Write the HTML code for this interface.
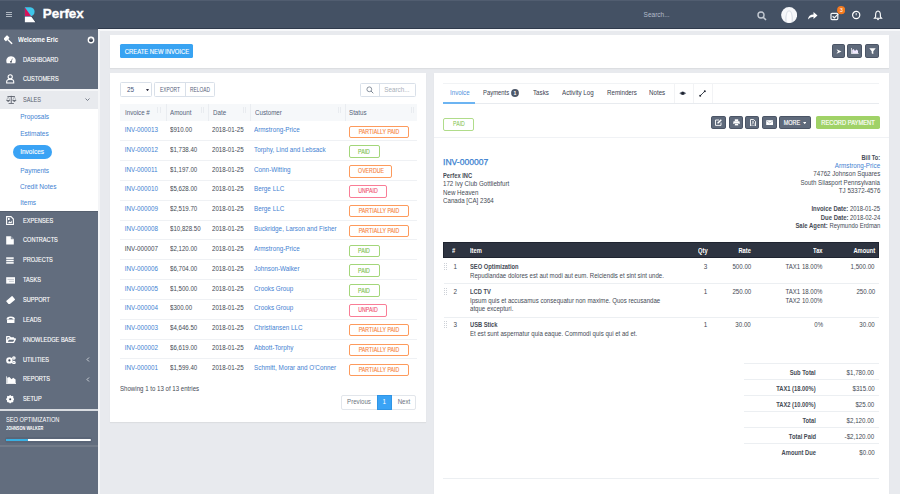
<!DOCTYPE html><html><head><meta charset="utf-8"><style>
html,body{margin:0;padding:0;width:900px;height:494px;overflow:hidden;background:#e8eaee;font-family:"Liberation Sans",sans-serif;}
.t{position:absolute;white-space:nowrap;}
.r{position:absolute;display:block;}
</style></head><body>
<div class="r" style="left:0.00px;top:0.00px;width:900.00px;height:29.00px;background:#445164;"></div>
<div class="r" style="left:0.00px;top:0.00px;width:900.00px;height:1.00px;background:#515d70;"></div>
<div class="r" style="left:98.00px;top:28.00px;width:802.00px;height:1.00px;background:#2f3a4c;"></div>
<div class="r" style="left:0.00px;top:28.50px;width:98.00px;height:1.50px;background:#535e70;"></div>
<div class="r" style="left:98.00px;top:29.30px;width:802.00px;height:1.50px;background:#f7f8fa;"></div>
<div class="r" style="left:5.50px;top:12.20px;width:6.00px;height:0.90px;background:#aeb6c1;"></div>
<div class="r" style="left:5.50px;top:14.20px;width:6.00px;height:0.90px;background:#aeb6c1;"></div>
<div class="r" style="left:5.50px;top:16.20px;width:6.00px;height:0.90px;background:#aeb6c1;"></div>
<svg class="r" style="left:24.00px;top:6.50px;" width="12.5" height="16" viewBox="0 0 12.5 16">
<path d="M0.9 0.3 H6.3 A5 4.6 0 0 1 6.3 9.4 H0.9 Z" fill="#3fc6ea"/>
<path d="M0.9 0.5 L7.2 9.3 L0.9 9.3 Z" fill="#d5135a"/>
<path d="M7.2 9.4 L11.8 15.4" stroke="#2a3344" stroke-width="0.8"/>
<path d="M0.9 9.7 H7.4 L11.4 15.3 H0.9 Z" fill="#ffffff"/>
</svg>
<div class="t" style="top:5.60px;left:42.80px;font-size:13.4px;color:#fff;line-height:16px;font-weight:700;-webkit-text-stroke:0.35px #fff;">Perfex</div>
<div class="t" style="top:10.00px;left:643.60px;font-size:6.5px;color:#b3bccb;line-height:10px;">Search...</div>
<svg class="r" style="left:757.00px;top:11.00px;" width="10" height="10" viewBox="0 0 10 10"><circle cx="4" cy="4" r="3" fill="none" stroke="#c3c9d2" stroke-width="1.4"/><path d="M6.2 6.2 L9 9" stroke="#c3c9d2" stroke-width="1.6"/></svg>
<svg class="r" style="left:780.70px;top:6.70px;" width="16.2" height="16.2" viewBox="0 0 16.2 16.2"><circle cx="8.1" cy="8.1" r="8" fill="#f5f6f9"/><path d="M4.2 15 Q3.6 9.5 5.4 5.5 Q8.1 1.2 10.8 5.5 Q12.6 9.5 12 15 Z" fill="#dde1e8"/><path d="M5.6 15 Q5.2 10 6.3 6 Q8.1 3 9.9 6 Q11 10 10.6 15 Z" fill="#fbfbfd"/></svg>
<svg class="r" style="left:807.00px;top:11.00px;" width="11" height="9" viewBox="0 0 11 9"><path d="M1 8.5 Q1.5 3.5 6.5 3.5 V1 L10.5 4.5 L6.5 8 V5.8 Q3 5.8 1 8.5 Z" fill="#ffffff"/></svg>
<svg class="r" style="left:829.50px;top:11.50px;" width="10" height="9" viewBox="0 0 10 9"><rect x="1" y="1.3" width="6.8" height="6.3" rx="1" fill="none" stroke="#f3f5f8" stroke-width="1.2"/><path d="M2.6 4.3 L4.3 5.9 L8.3 1.8" fill="none" stroke="#f3f5f8" stroke-width="1.2"/></svg>
<svg class="r" style="left:836.70px;top:6.20px;" width="8.4" height="8.4" viewBox="0 0 8.4 8.4"><circle cx="4.2" cy="4.2" r="4.1" fill="#f57a1f"/><text x="4.2" y="6.2" font-size="5.6" font-family="Liberation Sans" fill="#fff" text-anchor="middle">3</text></svg>
<svg class="r" style="left:851.00px;top:10.30px;" width="11" height="11" viewBox="0 0 11 11"><circle cx="5.2" cy="5" r="3.6" fill="none" stroke="#fff" stroke-width="1.2"/><path d="M5.2 3 V5.3" fill="none" stroke="#fff" stroke-width="0.9"/></svg>
<svg class="r" style="left:873.00px;top:10.30px;" width="10" height="10.5" viewBox="0 0 10 10.5"><path d="M5 1 Q2.6 1.3 2.6 5 V6.8 L1.4 8.3 H8.6 L7.4 6.8 V5 Q7.4 1.3 5 1 Z" fill="none" stroke="#fff" stroke-width="1.1"/><circle cx="5" cy="9.3" r="0.9" fill="#fff"/></svg>
<div class="r" style="left:0.00px;top:30.00px;width:98.00px;height:464.00px;background:#626d7e;"></div>
<div class="r" style="left:98.00px;top:30.00px;width:2.00px;height:464.00px;background:#f4f5f7;"></div>
<div class="r" style="left:0.00px;top:89.00px;width:98.00px;height:1.50px;background:#f4f5f7;"></div>
<div class="r" style="left:0.00px;top:90.50px;width:98.00px;height:18.50px;background:#e8eaee;"></div>
<div class="r" style="left:0.00px;top:109.00px;width:98.00px;height:102.00px;background:#ffffff;"></div>
<div class="r" style="left:0.00px;top:211.00px;width:98.00px;height:1.00px;background:#56606f;"></div>
<div class="t" style="top:34.60px;left:17.80px;font-size:6.4px;color:#ffffff;line-height:10px;font-weight:700;transform:scaleX(0.96);transform-origin:left center;">Welcome Eric</div>
<svg class="r" style="left:86.50px;top:35.90px;" width="8" height="8" viewBox="0 0 8 8"><circle cx="4" cy="4" r="3.4" fill="#fff"/><circle cx="4" cy="4.2" r="1.9" fill="#3b4454"/><path d="M4 0.8 V3.6" stroke="#fff" stroke-width="0.9"/><path d="M4 1.8 V3.8" stroke="#3b4454" stroke-width="0.7"/></svg>
<div class="t" style="top:54.50px;left:22.70px;font-size:6.5px;color:#ffffff;line-height:10px;transform:scaleX(0.86);transform-origin:left center;-webkit-text-stroke:0.12px #fff;">DASHBOARD</div>
<div class="t" style="top:74.20px;left:22.70px;font-size:6.5px;color:#ffffff;line-height:10px;transform:scaleX(0.86);transform-origin:left center;-webkit-text-stroke:0.12px #fff;">CUSTOMERS</div>
<div class="t" style="top:94.50px;left:22.70px;font-size:6.5px;color:#5a616e;line-height:10px;transform:scaleX(0.86);transform-origin:left center;">SALES</div>
<svg class="r" style="left:84.50px;top:97.50px;" width="5" height="3.5" viewBox="0 0 5 3.5"><path d="M0.5 0.5 L2.5 2.5 L4.5 0.5" fill="none" stroke="#6b7380" stroke-width="0.9"/></svg>
<svg class="r" style="left:3.50px;top:34.50px;" width="10" height="10" viewBox="0 0 10 10"><g transform="rotate(-45 5 5)"><rect x="1.8" y="0.2" width="5.2" height="3.6" rx="0.6" fill="#ffffff"/><rect x="3.7" y="3.6" width="1.5" height="6.4" rx="0.5" fill="#ffffff"/></g></svg>
<svg class="r" style="left:5.60px;top:55.60px;" width="10" height="8" viewBox="0 0 10 8"><path d="M0.9 7.2 A4.7 4.7 0 1 1 9.1 7.2 Z" fill="#ffffff"/><circle cx="5" cy="5.8" r="0.9" fill="#3b4454"/><path d="M5 5.8 L6.4 2.6" stroke="#3b4454" stroke-width="0.6"/></svg>
<svg class="r" style="left:5.80px;top:74.30px;" width="9" height="10" viewBox="0 0 9 10"><circle cx="4.2" cy="2.8" r="2.1" fill="none" stroke="#ffffff" stroke-width="1.1"/><path d="M0.7 9 V7.6 Q0.7 5.2 4.2 5.2 Q7.7 5.2 7.7 7.6 V9 Z" fill="none" stroke="#ffffff" stroke-width="1.1"/></svg>
<svg class="r" style="left:6.00px;top:94.70px;" width="10.5" height="9.5" viewBox="0 0 10.5 9.5"><path d="M5.25 0.8 V8.3 M1.5 1.5 H9 M2.6 8.6 H7.9" stroke="#5a606b" stroke-width="0.9"/><path d="M0.4 5.6 L2.2 1.6 L4 5.6 M6.5 5.6 L8.3 1.6 L10.1 5.6" fill="none" stroke="#8a9099" stroke-width="0.6"/><path d="M0.2 5.3 H4.2 Q2.2 8 0.2 5.3 Z M6.3 5.3 H10.3 Q8.3 8 6.3 5.3 Z" fill="#3f4550"/></svg>
<div class="t" style="top:112.40px;left:20.20px;font-size:6.5px;color:#3f82d2;line-height:10px;">Proposals</div>
<div class="t" style="top:128.90px;left:20.20px;font-size:6.5px;color:#3f82d2;line-height:10px;">Estimates</div>
<div class="r" style="left:13.20px;top:144.80px;width:38.80px;height:14.20px;background:#3aa3f5;border-radius:7px;"></div>
<div class="t" style="top:147.40px;left:20.20px;font-size:6.5px;color:#fff;line-height:10px;-webkit-text-stroke:0.1px #fff;">Invoices</div>
<div class="t" style="top:166.30px;left:20.20px;font-size:6.5px;color:#3f82d2;line-height:10px;">Payments</div>
<div class="t" style="top:182.20px;left:20.20px;font-size:6.5px;color:#3f82d2;line-height:10px;transform:scaleX(1.01);transform-origin:left center;">Credit Notes</div>
<div class="t" style="top:198.30px;left:20.20px;font-size:6.5px;color:#3f82d2;line-height:10px;">Items</div>
<div class="t" style="top:215.50px;left:22.70px;font-size:6.5px;color:#ffffff;line-height:10px;transform:scaleX(0.86);transform-origin:left center;-webkit-text-stroke:0.12px #fff;">EXPENSES</div>
<div class="t" style="top:235.36px;left:22.70px;font-size:6.5px;color:#ffffff;line-height:10px;transform:scaleX(0.86);transform-origin:left center;-webkit-text-stroke:0.12px #fff;">CONTRACTS</div>
<div class="t" style="top:255.22px;left:22.70px;font-size:6.5px;color:#ffffff;line-height:10px;transform:scaleX(0.86);transform-origin:left center;-webkit-text-stroke:0.12px #fff;">PROJECTS</div>
<div class="t" style="top:275.08px;left:22.70px;font-size:6.5px;color:#ffffff;line-height:10px;transform:scaleX(0.86);transform-origin:left center;-webkit-text-stroke:0.12px #fff;">TASKS</div>
<div class="t" style="top:294.94px;left:22.70px;font-size:6.5px;color:#ffffff;line-height:10px;transform:scaleX(0.86);transform-origin:left center;-webkit-text-stroke:0.12px #fff;">SUPPORT</div>
<div class="t" style="top:314.80px;left:22.70px;font-size:6.5px;color:#ffffff;line-height:10px;transform:scaleX(0.86);transform-origin:left center;-webkit-text-stroke:0.12px #fff;">LEADS</div>
<div class="t" style="top:334.66px;left:22.70px;font-size:6.5px;color:#ffffff;line-height:10px;transform:scaleX(0.86);transform-origin:left center;-webkit-text-stroke:0.12px #fff;">KNOWLEDGE BASE</div>
<div class="t" style="top:354.52px;left:22.70px;font-size:6.5px;color:#ffffff;line-height:10px;transform:scaleX(0.86);transform-origin:left center;-webkit-text-stroke:0.12px #fff;">UTILITIES</div>
<div class="t" style="top:374.38px;left:22.70px;font-size:6.5px;color:#ffffff;line-height:10px;transform:scaleX(0.86);transform-origin:left center;-webkit-text-stroke:0.12px #fff;">REPORTS</div>
<div class="t" style="top:394.24px;left:22.70px;font-size:6.5px;color:#ffffff;line-height:10px;transform:scaleX(0.86);transform-origin:left center;-webkit-text-stroke:0.12px #fff;">SETUP</div>
<svg class="r" style="left:86.00px;top:357.20px;" width="3.5" height="5" viewBox="0 0 3.5 5"><path d="M3 0.5 L1 2.5 L3 4.5" fill="none" stroke="#d6dae0" stroke-width="0.9"/></svg>
<svg class="r" style="left:86.00px;top:377.00px;" width="3.5" height="5" viewBox="0 0 3.5 5"><path d="M3 0.5 L1 2.5 L3 4.5" fill="none" stroke="#d6dae0" stroke-width="0.9"/></svg>
<svg class="r" style="left:6.00px;top:216.30px;" width="8" height="9.2" viewBox="0 0 8 9.2"><path d="M0.6 0.6 H5 L7.4 3 V8.6 H0.6 Z" fill="none" stroke="#ffffff" stroke-width="1.1"/><rect x="2" y="2" width="1.6" height="2" fill="#ffffff"/><path d="M2 7 L3.5 5.2 L4.6 6.2 L5.8 4.5 V7.2 H2 Z" fill="#ffffff"/></svg>
<svg class="r" style="left:6.00px;top:236.40px;" width="8" height="8.8" viewBox="0 0 8 8.8"><path d="M0.2 0.2 H4.8 L7.8 3.2 V8.6 H0.2 Z" fill="#ffffff"/><path d="M4.8 0.2 V3.2 H7.8" fill="#8a93a1"/></svg>
<svg class="r" style="left:6.00px;top:257.30px;" width="8" height="7" viewBox="0 0 8 7"><rect x="0.2" y="0.3" width="7.5" height="1.6" fill="#ffffff"/><rect x="0.2" y="2.7" width="7.5" height="1.6" fill="#ffffff"/><rect x="0.2" y="5.1" width="7.5" height="1.6" fill="#ffffff"/></svg>
<svg class="r" style="left:5.80px;top:276.80px;" width="9.6" height="6.8" viewBox="0 0 9.6 6.8"><rect x="0.2" y="0.2" width="9.2" height="6.4" fill="#ffffff"/><path d="M1.5 2.4 H8 M3 4.3 H8" stroke="#aab1bc" stroke-width="0.7"/></svg>
<svg class="r" style="left:6.00px;top:295.80px;" width="9.2" height="8.6" viewBox="0 0 9.2 8.6"><g transform="rotate(-40 4.6 4.3)"><rect x="0.6" y="1.9" width="8" height="4.8" rx="0.6" fill="#ffffff"/></g></svg>
<svg class="r" style="left:5.90px;top:316.00px;" width="9.5" height="7.2" viewBox="0 0 9.5 7.2"><path d="M0.5 3.5 Q0.5 0.4 4.75 0.4 Q9 0.4 9 3.5 L7.2 3.5 Q6.5 2 4.75 2 Q3 2 2.3 3.5 Z" fill="#ffffff"/><rect x="1" y="3.6" width="7.5" height="3.3" rx="0.5" fill="#ffffff"/></svg>
<svg class="r" style="left:6.00px;top:336.00px;" width="10" height="7.2" viewBox="0 0 10 7.2"><path d="M0.7 6.4 V0.7 H3.5 L4.5 1.8 H7.5 V3 M0.7 6.4 L2.6 3 H9.4 L7.6 6.4 Z" fill="none" stroke="#ffffff" stroke-width="1.3" stroke-linejoin="round"/></svg>
<svg class="r" style="left:6.00px;top:355.60px;" width="10" height="8.4" viewBox="0 0 10 8.4"><circle cx="3.4" cy="4.4" r="3.2" fill="#ffffff"/><circle cx="3.4" cy="4.4" r="1.1" fill="#3b4454"/><circle cx="7.9" cy="2" r="1.8" fill="#ffffff"/><circle cx="7.9" cy="2" r="0.6" fill="#8a93a1"/><circle cx="7.9" cy="6.5" r="1.8" fill="#ffffff"/><circle cx="7.9" cy="6.5" r="0.6" fill="#8a93a1"/></svg>
<svg class="r" style="left:5.80px;top:375.80px;" width="10.2" height="7.8" viewBox="0 0 10.2 7.8"><path d="M0.3 0.3 V7.5 H10" fill="none" stroke="#ffffff" stroke-width="0.9"/><path d="M1.2 7 V1.8 L3.4 1 L5.6 3.2 L7.2 1.8 L9.6 3.5 V7 Z" fill="#ffffff"/></svg>
<svg class="r" style="left:6.00px;top:395.20px;" width="8.4" height="8.4" viewBox="0 0 8.4 8.4"><circle cx="4.2" cy="4.2" r="2.6" fill="none" stroke="#ffffff" stroke-width="1.7"/><g stroke="#ffffff" stroke-width="1.4"><path d="M4.2 4.2 L8.20 4.20"/><path d="M4.2 4.2 L7.03 7.03"/><path d="M4.2 4.2 L4.20 8.20"/><path d="M4.2 4.2 L1.37 7.03"/><path d="M4.2 4.2 L0.20 4.20"/><path d="M4.2 4.2 L1.37 1.37"/><path d="M4.2 4.2 L4.20 0.20"/><path d="M4.2 4.2 L7.03 1.37"/></g><circle cx="4.2" cy="4.2" r="1" fill="#3b4454"/></svg>
<div class="r" style="left:0.00px;top:409.20px;width:98.00px;height:2.00px;background:#d9dce1;"></div>
<div class="t" style="top:415.20px;left:6.40px;font-size:6.3px;color:#ffffff;line-height:10px;transform:scaleX(0.9);transform-origin:left center;">SEO OPTIMIZATION</div>
<div class="t" style="top:424.20px;left:6.40px;font-size:4.6px;color:#ffffff;line-height:10px;font-weight:700;transform:scaleX(0.85);transform-origin:left center;">JOHNSON WALKER</div>
<div class="r" style="left:4.80px;top:437.00px;width:87.40px;height:6.20px;background:#5a6577;border-radius:3px;"></div>
<div class="r" style="left:6.00px;top:439.00px;width:85.00px;height:2.30px;background:#ffffff;border-radius:1px;"></div>
<div class="r" style="left:6.00px;top:439.00px;width:22.30px;height:2.30px;background:#3ab0e2;"></div>
<div class="r" style="left:0.00px;top:445.30px;width:98.00px;height:1.50px;background:#727b89;"></div>
<div class="r" style="left:110.00px;top:35.00px;width:779.20px;height:33.00px;background:#fff;box-shadow:0 1px 1px rgba(0,0,0,0.05);"></div>
<div class="r" style="left:120.00px;top:44.30px;width:73.30px;height:13.70px;background:#38a3f2;border-radius:1.5px;"></div>
<div class="t" style="top:46.90px;left:6.50px;width:300px;text-align:center;font-size:6.5px;color:#fff;line-height:10px;transform:scaleX(0.9);transform-origin:center center;-webkit-text-stroke:0.12px #fff;">CREATE NEW INVOICE</div>
<div class="r" style="left:832.30px;top:44.30px;width:12.40px;height:13.40px;background:#5f6a7b;border-radius:1.8px;box-sizing:border-box;border:1px solid #4b5566;"></div>
<div class="r" style="left:847.10px;top:44.30px;width:15.40px;height:13.40px;background:#5f6a7b;border-radius:1.8px;box-sizing:border-box;border:1px solid #4b5566;"></div>
<div class="r" style="left:865.30px;top:44.30px;width:14.10px;height:13.40px;background:#5f6a7b;border-radius:1.8px;box-sizing:border-box;border:1px solid #4b5566;"></div>
<svg class="r" style="left:835.50px;top:48.50px;" width="6" height="5" viewBox="0 0 6 5"><path d="M0.5 0.3 L5.5 2.5 L0.5 4.7 L2 2.5 Z" fill="#fff"/></svg>
<svg class="r" style="left:851.00px;top:48.00px;" width="8" height="6" viewBox="0 0 8 6"><path d="M0.4 0 V5.6 H7.6" fill="none" stroke="#fff" stroke-width="0.8"/><path d="M1.2 5.2 V2 L2.6 1 L4 3 L5.4 1.5 L7 2.8 V5.2 Z" fill="#f0e8ff"/></svg>
<svg class="r" style="left:869.00px;top:47.80px;" width="7" height="6.5" viewBox="0 0 7 6.5"><path d="M0.3 0.3 H6.7 L4.3 3.3 V6.2 L2.7 5.2 V3.3 Z" fill="#fff"/></svg>
<div class="r" style="left:110.00px;top:73.00px;width:316.00px;height:349.30px;background:#fff;box-shadow:0 1px 1px rgba(0,0,0,0.05);"></div>
<div class="r" style="left:120.00px;top:82.20px;width:32.00px;height:15.00px;background:#fff;box-sizing:border-box;border:1px solid #d9e0e9;border-radius:1.5px;"></div>
<div class="t" style="top:84.80px;left:127.00px;font-size:6.4px;color:#47577a;line-height:10px;">25</div>
<svg class="r" style="left:145.60px;top:88.80px;" width="3" height="2.4" viewBox="0 0 3 2.4"><path d="M0 0 H3 L1.5 2.4 Z" fill="#334"/></svg>
<div class="r" style="left:154.00px;top:82.20px;width:61.00px;height:15.00px;background:#fff;box-sizing:border-box;border:1px solid #d9e0e9;border-radius:1.5px;"></div>
<div class="r" style="left:184.50px;top:82.20px;width:0.80px;height:15.00px;background:#d9e0e9;"></div>
<div class="t" style="top:84.80px;left:19.50px;width:300px;text-align:center;font-size:6.3px;color:#56607a;line-height:10px;transform:scaleX(0.77);transform-origin:center center;">EXPORT</div>
<div class="t" style="top:84.80px;left:49.60px;width:300px;text-align:center;font-size:6.3px;color:#56607a;line-height:10px;transform:scaleX(0.77);transform-origin:center center;">RELOAD</div>
<div class="r" style="left:360.40px;top:82.50px;width:56.10px;height:14.50px;background:#fff;box-sizing:border-box;border:1px solid #d9e0e9;border-radius:1.5px;"></div>
<div class="r" style="left:379.00px;top:82.50px;width:0.80px;height:14.50px;background:#d9e0e9;"></div>
<svg class="r" style="left:366.00px;top:86.00px;" width="8" height="8" viewBox="0 0 8 8"><circle cx="3.3" cy="3.3" r="2.4" fill="none" stroke="#7d8794" stroke-width="0.9"/><path d="M5 5 L7.3 7.3" stroke="#7d8794" stroke-width="1"/></svg>
<div class="t" style="top:84.90px;left:384.30px;font-size:6.3px;color:#a9b0ba;line-height:10px;">Search...</div>
<div class="r" style="left:120.00px;top:103.50px;width:296.50px;height:17.00px;background:#f6f8fa;"></div>
<div class="r" style="left:165.50px;top:103.50px;width:0.80px;height:17.00px;background:#eaedf1;"></div>
<div class="r" style="left:207.50px;top:103.50px;width:0.80px;height:17.00px;background:#eaedf1;"></div>
<div class="r" style="left:249.70px;top:103.50px;width:0.80px;height:17.00px;background:#eaedf1;"></div>
<div class="r" style="left:344.60px;top:103.50px;width:0.80px;height:17.00px;background:#eaedf1;"></div>
<div class="r" style="left:157.00px;top:107.00px;width:0.90px;height:6.00px;background:#e9ecf0;"></div>
<div class="r" style="left:159.90px;top:107.00px;width:0.90px;height:6.00px;background:#e9ecf0;"></div>
<div class="r" style="left:200.50px;top:107.00px;width:0.90px;height:6.00px;background:#e9ecf0;"></div>
<div class="r" style="left:203.40px;top:107.00px;width:0.90px;height:6.00px;background:#e9ecf0;"></div>
<div class="r" style="left:242.50px;top:107.00px;width:0.90px;height:6.00px;background:#e9ecf0;"></div>
<div class="r" style="left:245.40px;top:107.00px;width:0.90px;height:6.00px;background:#e9ecf0;"></div>
<div class="r" style="left:337.50px;top:107.00px;width:0.90px;height:6.00px;background:#e9ecf0;"></div>
<div class="r" style="left:340.40px;top:107.00px;width:0.90px;height:6.00px;background:#e9ecf0;"></div>
<div class="r" style="left:410.50px;top:107.00px;width:0.90px;height:6.00px;background:#e9ecf0;"></div>
<div class="r" style="left:413.40px;top:107.00px;width:0.90px;height:6.00px;background:#e9ecf0;"></div>
<div class="t" style="top:107.60px;left:125.00px;font-size:6.4px;color:#55647a;line-height:10px;transform:scaleX(0.97);transform-origin:left center;">Invoice #</div>
<div class="t" style="top:107.60px;left:170.30px;font-size:6.4px;color:#55647a;line-height:10px;transform:scaleX(0.97);transform-origin:left center;">Amount</div>
<div class="t" style="top:107.60px;left:212.50px;font-size:6.4px;color:#55647a;line-height:10px;transform:scaleX(0.97);transform-origin:left center;">Date</div>
<div class="t" style="top:107.60px;left:254.50px;font-size:6.4px;color:#55647a;line-height:10px;transform:scaleX(0.97);transform-origin:left center;">Customer</div>
<div class="t" style="top:107.60px;left:349.40px;font-size:6.4px;color:#55647a;line-height:10px;transform:scaleX(0.97);transform-origin:left center;">Status</div>
<div class="t" style="top:124.90px;left:124.80px;font-size:6.3px;color:#3f82d2;line-height:10px;">INV-000013</div>
<div class="t" style="top:124.90px;left:170.40px;font-size:6.3px;color:#454b55;line-height:10px;transform:scaleX(0.97);transform-origin:left center;">$910.00</div>
<div class="t" style="top:124.90px;left:212.40px;font-size:6.3px;color:#454b55;line-height:10px;transform:scaleX(0.98);transform-origin:left center;">2018-01-25</div>
<div class="t" style="top:124.90px;left:254.40px;font-size:6.3px;color:#3f82d2;line-height:10px;transform:scaleX(1.005);transform-origin:left center;">Armstrong-Price</div>
<div class="r" style="left:349.20px;top:125.50px;width:59.60px;height:12.50px;background:#fff;box-sizing:border-box;border:1px solid #fd9a5c;border-radius:2px;"></div>
<div class="t" style="top:126.80px;left:229.00px;width:300px;text-align:center;font-size:6.3px;color:#f77f3a;line-height:10px;transform:scaleX(0.83);transform-origin:center center;-webkit-text-stroke:0.12px #f77f3a;">PARTIALLY PAID</div>
<div class="r" style="left:120.00px;top:140.24px;width:296.50px;height:0.80px;background:#eff1f4;"></div>
<div class="t" style="top:144.74px;left:124.80px;font-size:6.3px;color:#3f82d2;line-height:10px;">INV-000012</div>
<div class="t" style="top:144.74px;left:170.40px;font-size:6.3px;color:#454b55;line-height:10px;transform:scaleX(0.97);transform-origin:left center;">$1,738.40</div>
<div class="t" style="top:144.74px;left:212.40px;font-size:6.3px;color:#454b55;line-height:10px;transform:scaleX(0.98);transform-origin:left center;">2018-01-25</div>
<div class="t" style="top:144.74px;left:254.40px;font-size:6.3px;color:#3f82d2;line-height:10px;transform:scaleX(1.005);transform-origin:left center;">Torphy, Lind and Lebsack</div>
<div class="r" style="left:349.20px;top:145.34px;width:30.50px;height:12.50px;background:#fff;box-sizing:border-box;border:1px solid #a3d67a;border-radius:2px;"></div>
<div class="t" style="top:146.64px;left:214.45px;width:300px;text-align:center;font-size:6.3px;color:#7cc14a;line-height:10px;transform:scaleX(0.83);transform-origin:center center;-webkit-text-stroke:0.12px #7cc14a;">PAID</div>
<div class="r" style="left:120.00px;top:160.08px;width:296.50px;height:0.80px;background:#eff1f4;"></div>
<div class="t" style="top:164.58px;left:124.80px;font-size:6.3px;color:#3f82d2;line-height:10px;">INV-000011</div>
<div class="t" style="top:164.58px;left:170.40px;font-size:6.3px;color:#454b55;line-height:10px;transform:scaleX(0.97);transform-origin:left center;">$1,197.00</div>
<div class="t" style="top:164.58px;left:212.40px;font-size:6.3px;color:#454b55;line-height:10px;transform:scaleX(0.98);transform-origin:left center;">2018-01-25</div>
<div class="t" style="top:164.58px;left:254.40px;font-size:6.3px;color:#3f82d2;line-height:10px;transform:scaleX(1.005);transform-origin:left center;">Conn-Witting</div>
<div class="r" style="left:349.20px;top:165.18px;width:42.60px;height:12.50px;background:#fff;box-sizing:border-box;border:1px solid #fd9a5c;border-radius:2px;"></div>
<div class="t" style="top:166.48px;left:220.50px;width:300px;text-align:center;font-size:6.3px;color:#f77f3a;line-height:10px;transform:scaleX(0.83);transform-origin:center center;-webkit-text-stroke:0.12px #f77f3a;">OVERDUE</div>
<div class="r" style="left:120.00px;top:179.92px;width:296.50px;height:0.80px;background:#eff1f4;"></div>
<div class="t" style="top:184.42px;left:124.80px;font-size:6.3px;color:#3f82d2;line-height:10px;">INV-000010</div>
<div class="t" style="top:184.42px;left:170.40px;font-size:6.3px;color:#454b55;line-height:10px;transform:scaleX(0.97);transform-origin:left center;">$5,628.00</div>
<div class="t" style="top:184.42px;left:212.40px;font-size:6.3px;color:#454b55;line-height:10px;transform:scaleX(0.98);transform-origin:left center;">2018-01-25</div>
<div class="t" style="top:184.42px;left:254.40px;font-size:6.3px;color:#3f82d2;line-height:10px;transform:scaleX(1.005);transform-origin:left center;">Berge LLC</div>
<div class="r" style="left:349.20px;top:185.02px;width:38.10px;height:12.50px;background:#fff;box-sizing:border-box;border:1px solid #f97d96;border-radius:2px;"></div>
<div class="t" style="top:186.32px;left:218.25px;width:300px;text-align:center;font-size:6.3px;color:#f0506e;line-height:10px;transform:scaleX(0.83);transform-origin:center center;-webkit-text-stroke:0.12px #f0506e;">UNPAID</div>
<div class="r" style="left:120.00px;top:199.76px;width:296.50px;height:0.80px;background:#eff1f4;"></div>
<div class="t" style="top:204.26px;left:124.80px;font-size:6.3px;color:#3f82d2;line-height:10px;">INV-000009</div>
<div class="t" style="top:204.26px;left:170.40px;font-size:6.3px;color:#454b55;line-height:10px;transform:scaleX(0.97);transform-origin:left center;">$2,519.70</div>
<div class="t" style="top:204.26px;left:212.40px;font-size:6.3px;color:#454b55;line-height:10px;transform:scaleX(0.98);transform-origin:left center;">2018-01-25</div>
<div class="t" style="top:204.26px;left:254.40px;font-size:6.3px;color:#3f82d2;line-height:10px;transform:scaleX(1.005);transform-origin:left center;">Berge LLC</div>
<div class="r" style="left:349.20px;top:204.86px;width:59.60px;height:12.50px;background:#fff;box-sizing:border-box;border:1px solid #fd9a5c;border-radius:2px;"></div>
<div class="t" style="top:206.16px;left:229.00px;width:300px;text-align:center;font-size:6.3px;color:#f77f3a;line-height:10px;transform:scaleX(0.83);transform-origin:center center;-webkit-text-stroke:0.12px #f77f3a;">PARTIALLY PAID</div>
<div class="r" style="left:120.00px;top:219.60px;width:296.50px;height:0.80px;background:#eff1f4;"></div>
<div class="t" style="top:224.10px;left:124.80px;font-size:6.3px;color:#3f82d2;line-height:10px;">INV-000008</div>
<div class="t" style="top:224.10px;left:170.40px;font-size:6.3px;color:#454b55;line-height:10px;transform:scaleX(0.97);transform-origin:left center;">$10,828.50</div>
<div class="t" style="top:224.10px;left:212.40px;font-size:6.3px;color:#454b55;line-height:10px;transform:scaleX(0.98);transform-origin:left center;">2018-01-25</div>
<div class="t" style="top:224.10px;left:254.40px;font-size:6.3px;color:#3f82d2;line-height:10px;transform:scaleX(1.005);transform-origin:left center;">Buckridge, Larson and Fisher</div>
<div class="r" style="left:349.20px;top:224.70px;width:59.60px;height:12.50px;background:#fff;box-sizing:border-box;border:1px solid #fd9a5c;border-radius:2px;"></div>
<div class="t" style="top:226.00px;left:229.00px;width:300px;text-align:center;font-size:6.3px;color:#f77f3a;line-height:10px;transform:scaleX(0.83);transform-origin:center center;-webkit-text-stroke:0.12px #f77f3a;">PARTIALLY PAID</div>
<div class="r" style="left:120.00px;top:239.44px;width:296.50px;height:0.80px;background:#eff1f4;"></div>
<div class="t" style="top:243.94px;left:124.80px;font-size:6.3px;color:#454b55;line-height:10px;">INV-000007</div>
<div class="t" style="top:243.94px;left:170.40px;font-size:6.3px;color:#454b55;line-height:10px;transform:scaleX(0.97);transform-origin:left center;">$2,120.00</div>
<div class="t" style="top:243.94px;left:212.40px;font-size:6.3px;color:#454b55;line-height:10px;transform:scaleX(0.98);transform-origin:left center;">2018-01-25</div>
<div class="t" style="top:243.94px;left:254.40px;font-size:6.3px;color:#3f82d2;line-height:10px;transform:scaleX(1.005);transform-origin:left center;">Armstrong-Price</div>
<div class="r" style="left:349.20px;top:244.54px;width:30.50px;height:12.50px;background:#fff;box-sizing:border-box;border:1px solid #a3d67a;border-radius:2px;"></div>
<div class="t" style="top:245.84px;left:214.45px;width:300px;text-align:center;font-size:6.3px;color:#7cc14a;line-height:10px;transform:scaleX(0.83);transform-origin:center center;-webkit-text-stroke:0.12px #7cc14a;">PAID</div>
<div class="r" style="left:120.00px;top:259.28px;width:296.50px;height:0.80px;background:#eff1f4;"></div>
<div class="t" style="top:263.78px;left:124.80px;font-size:6.3px;color:#3f82d2;line-height:10px;">INV-000006</div>
<div class="t" style="top:263.78px;left:170.40px;font-size:6.3px;color:#454b55;line-height:10px;transform:scaleX(0.97);transform-origin:left center;">$6,704.00</div>
<div class="t" style="top:263.78px;left:212.40px;font-size:6.3px;color:#454b55;line-height:10px;transform:scaleX(0.98);transform-origin:left center;">2018-01-25</div>
<div class="t" style="top:263.78px;left:254.40px;font-size:6.3px;color:#3f82d2;line-height:10px;transform:scaleX(1.005);transform-origin:left center;">Johnson-Walker</div>
<div class="r" style="left:349.20px;top:264.38px;width:30.50px;height:12.50px;background:#fff;box-sizing:border-box;border:1px solid #a3d67a;border-radius:2px;"></div>
<div class="t" style="top:265.68px;left:214.45px;width:300px;text-align:center;font-size:6.3px;color:#7cc14a;line-height:10px;transform:scaleX(0.83);transform-origin:center center;-webkit-text-stroke:0.12px #7cc14a;">PAID</div>
<div class="r" style="left:120.00px;top:279.12px;width:296.50px;height:0.80px;background:#eff1f4;"></div>
<div class="t" style="top:283.62px;left:124.80px;font-size:6.3px;color:#3f82d2;line-height:10px;">INV-000005</div>
<div class="t" style="top:283.62px;left:170.40px;font-size:6.3px;color:#454b55;line-height:10px;transform:scaleX(0.97);transform-origin:left center;">$1,500.00</div>
<div class="t" style="top:283.62px;left:212.40px;font-size:6.3px;color:#454b55;line-height:10px;transform:scaleX(0.98);transform-origin:left center;">2018-01-25</div>
<div class="t" style="top:283.62px;left:254.40px;font-size:6.3px;color:#3f82d2;line-height:10px;transform:scaleX(1.005);transform-origin:left center;">Crooks Group</div>
<div class="r" style="left:349.20px;top:284.22px;width:30.50px;height:12.50px;background:#fff;box-sizing:border-box;border:1px solid #a3d67a;border-radius:2px;"></div>
<div class="t" style="top:285.52px;left:214.45px;width:300px;text-align:center;font-size:6.3px;color:#7cc14a;line-height:10px;transform:scaleX(0.83);transform-origin:center center;-webkit-text-stroke:0.12px #7cc14a;">PAID</div>
<div class="r" style="left:120.00px;top:298.96px;width:296.50px;height:0.80px;background:#eff1f4;"></div>
<div class="t" style="top:303.46px;left:124.80px;font-size:6.3px;color:#3f82d2;line-height:10px;">INV-000004</div>
<div class="t" style="top:303.46px;left:170.40px;font-size:6.3px;color:#454b55;line-height:10px;transform:scaleX(0.97);transform-origin:left center;">$300.00</div>
<div class="t" style="top:303.46px;left:212.40px;font-size:6.3px;color:#454b55;line-height:10px;transform:scaleX(0.98);transform-origin:left center;">2018-01-25</div>
<div class="t" style="top:303.46px;left:254.40px;font-size:6.3px;color:#3f82d2;line-height:10px;transform:scaleX(1.005);transform-origin:left center;">Crooks Group</div>
<div class="r" style="left:349.20px;top:304.06px;width:38.10px;height:12.50px;background:#fff;box-sizing:border-box;border:1px solid #f97d96;border-radius:2px;"></div>
<div class="t" style="top:305.36px;left:218.25px;width:300px;text-align:center;font-size:6.3px;color:#f0506e;line-height:10px;transform:scaleX(0.83);transform-origin:center center;-webkit-text-stroke:0.12px #f0506e;">UNPAID</div>
<div class="r" style="left:120.00px;top:318.80px;width:296.50px;height:0.80px;background:#eff1f4;"></div>
<div class="t" style="top:323.30px;left:124.80px;font-size:6.3px;color:#3f82d2;line-height:10px;">INV-000003</div>
<div class="t" style="top:323.30px;left:170.40px;font-size:6.3px;color:#454b55;line-height:10px;transform:scaleX(0.97);transform-origin:left center;">$4,646.50</div>
<div class="t" style="top:323.30px;left:212.40px;font-size:6.3px;color:#454b55;line-height:10px;transform:scaleX(0.98);transform-origin:left center;">2018-01-25</div>
<div class="t" style="top:323.30px;left:254.40px;font-size:6.3px;color:#3f82d2;line-height:10px;transform:scaleX(1.005);transform-origin:left center;">Christiansen LLC</div>
<div class="r" style="left:349.20px;top:323.90px;width:59.60px;height:12.50px;background:#fff;box-sizing:border-box;border:1px solid #fd9a5c;border-radius:2px;"></div>
<div class="t" style="top:325.20px;left:229.00px;width:300px;text-align:center;font-size:6.3px;color:#f77f3a;line-height:10px;transform:scaleX(0.83);transform-origin:center center;-webkit-text-stroke:0.12px #f77f3a;">PARTIALLY PAID</div>
<div class="r" style="left:120.00px;top:338.64px;width:296.50px;height:0.80px;background:#eff1f4;"></div>
<div class="t" style="top:343.14px;left:124.80px;font-size:6.3px;color:#3f82d2;line-height:10px;">INV-000002</div>
<div class="t" style="top:343.14px;left:170.40px;font-size:6.3px;color:#454b55;line-height:10px;transform:scaleX(0.97);transform-origin:left center;">$6,619.00</div>
<div class="t" style="top:343.14px;left:212.40px;font-size:6.3px;color:#454b55;line-height:10px;transform:scaleX(0.98);transform-origin:left center;">2018-01-25</div>
<div class="t" style="top:343.14px;left:254.40px;font-size:6.3px;color:#3f82d2;line-height:10px;transform:scaleX(1.005);transform-origin:left center;">Abbott-Torphy</div>
<div class="r" style="left:349.20px;top:343.74px;width:59.60px;height:12.50px;background:#fff;box-sizing:border-box;border:1px solid #fd9a5c;border-radius:2px;"></div>
<div class="t" style="top:345.04px;left:229.00px;width:300px;text-align:center;font-size:6.3px;color:#f77f3a;line-height:10px;transform:scaleX(0.83);transform-origin:center center;-webkit-text-stroke:0.12px #f77f3a;">PARTIALLY PAID</div>
<div class="r" style="left:120.00px;top:358.48px;width:296.50px;height:0.80px;background:#eff1f4;"></div>
<div class="t" style="top:362.98px;left:124.80px;font-size:6.3px;color:#3f82d2;line-height:10px;">INV-000001</div>
<div class="t" style="top:362.98px;left:170.40px;font-size:6.3px;color:#454b55;line-height:10px;transform:scaleX(0.97);transform-origin:left center;">$1,599.40</div>
<div class="t" style="top:362.98px;left:212.40px;font-size:6.3px;color:#454b55;line-height:10px;transform:scaleX(0.98);transform-origin:left center;">2018-01-25</div>
<div class="t" style="top:362.98px;left:254.40px;font-size:6.3px;color:#3f82d2;line-height:10px;transform:scaleX(1.005);transform-origin:left center;">Schmitt, Morar and O&#39;Conner</div>
<div class="r" style="left:349.20px;top:363.58px;width:59.60px;height:12.50px;background:#fff;box-sizing:border-box;border:1px solid #fd9a5c;border-radius:2px;"></div>
<div class="t" style="top:364.88px;left:229.00px;width:300px;text-align:center;font-size:6.3px;color:#f77f3a;line-height:10px;transform:scaleX(0.83);transform-origin:center center;-webkit-text-stroke:0.12px #f77f3a;">PARTIALLY PAID</div>
<div class="t" style="top:384.00px;left:120.00px;font-size:6.3px;color:#454b55;line-height:10px;transform:scaleX(0.97);transform-origin:left center;">Showing 1 to 13 of 13 entries</div>
<div class="r" style="left:341.10px;top:394.50px;width:75.30px;height:15.50px;background:#fff;box-sizing:border-box;border:1px solid #e2e6eb;border-radius:2px;"></div>
<div class="r" style="left:376.50px;top:394.50px;width:15.60px;height:15.50px;background:#3aa3f5;box-sizing:border-box;border:1px solid #2f95e6;"></div>
<div class="t" style="top:397.00px;left:208.80px;width:300px;text-align:center;font-size:6.3px;color:#6b7480;line-height:10px;transform:scaleX(0.97);transform-origin:center center;">Previous</div>
<div class="t" style="top:397.00px;left:234.30px;width:300px;text-align:center;font-size:6.3px;color:#fff;line-height:10px;">1</div>
<div class="t" style="top:397.00px;left:254.40px;width:300px;text-align:center;font-size:6.3px;color:#6b7480;line-height:10px;transform:scaleX(0.97);transform-origin:center center;">Next</div>
<div class="r" style="left:434.00px;top:73.00px;width:455.20px;height:421.00px;background:#fff;box-shadow:0 1px 1px rgba(0,0,0,0.05);"></div>
<div class="r" style="left:443.30px;top:82.50px;width:436.20px;height:0.80px;background:#f1f3f5;"></div>
<div class="r" style="left:443.30px;top:102.80px;width:436.20px;height:0.80px;background:#e8ebef;"></div>
<div class="r" style="left:443.30px;top:102.40px;width:32.00px;height:1.40px;background:#6cb4f2;"></div>
<div class="t" style="top:88.10px;left:450.00px;font-size:6.4px;color:#4f93dc;line-height:10px;transform:scaleX(0.97);transform-origin:left center;">Invoice</div>
<div class="t" style="top:88.10px;left:482.50px;font-size:6.4px;color:#3a4250;line-height:10px;transform:scaleX(0.92);transform-origin:left center;">Payments</div>
<svg class="r" style="left:511.00px;top:89.00px;" width="8" height="8" viewBox="0 0 8 8"><circle cx="4" cy="4" r="3.9" fill="#4d5768"/><text x="4" y="6" font-size="5.2" font-family="Liberation Sans" font-weight="700" fill="#fff" text-anchor="middle">1</text></svg>
<div class="t" style="top:88.10px;left:532.50px;font-size:6.4px;color:#3a4250;line-height:10px;transform:scaleX(0.97);transform-origin:left center;">Tasks</div>
<div class="t" style="top:88.10px;left:561.70px;font-size:6.4px;color:#3a4250;line-height:10px;transform:scaleX(0.97);transform-origin:left center;">Activity Log</div>
<div class="t" style="top:88.10px;left:607.00px;font-size:6.4px;color:#3a4250;line-height:10px;transform:scaleX(0.97);transform-origin:left center;">Reminders</div>
<div class="t" style="top:88.10px;left:649.20px;font-size:6.4px;color:#3a4250;line-height:10px;transform:scaleX(0.97);transform-origin:left center;">Notes</div>
<div class="r" style="left:673.80px;top:83.00px;width:0.80px;height:20.00px;background:#f2f3f5;"></div>
<div class="r" style="left:692.70px;top:83.00px;width:0.80px;height:20.00px;background:#f2f3f5;"></div>
<div class="r" style="left:711.60px;top:83.00px;width:0.80px;height:20.00px;background:#f2f3f5;"></div>
<svg class="r" style="left:679.00px;top:91.00px;" width="7.5" height="4.5" viewBox="0 0 7.5 4.5"><path d="M0.3 2.25 Q3.75 -1.2 7.2 2.25 Q3.75 5.7 0.3 2.25 Z" fill="#6b7280"/><circle cx="3.75" cy="2.25" r="1.5" fill="#1f2430"/></svg>
<svg class="r" style="left:698.50px;top:89.50px;" width="7" height="7" viewBox="0 0 7 7"><path d="M1 6 L6 1" stroke="#2e3440" stroke-width="0.9"/><circle cx="1.2" cy="5.8" r="1" fill="#1f2430"/><circle cx="5.8" cy="1.2" r="1" fill="#1f2430"/></svg>
<div class="r" style="left:443.30px;top:118.00px;width:30.40px;height:12.50px;background:#fff;box-sizing:border-box;border:1px solid #b0dc8a;border-radius:2px;"></div>
<div class="t" style="top:119.40px;left:308.50px;width:300px;text-align:center;font-size:6.3px;color:#7cc14a;line-height:10px;transform:scaleX(0.83);transform-origin:center center;">PAID</div>
<div class="r" style="left:711.00px;top:115.80px;width:15.40px;height:13.30px;background:#5f6a7b;border-radius:1.8px;box-sizing:border-box;border:1px solid #4b5566;"></div>
<div class="r" style="left:728.50px;top:115.80px;width:14.40px;height:13.30px;background:#5f6a7b;border-radius:1.8px;box-sizing:border-box;border:1px solid #4b5566;"></div>
<div class="r" style="left:745.40px;top:115.80px;width:14.10px;height:13.30px;background:#5f6a7b;border-radius:1.8px;box-sizing:border-box;border:1px solid #4b5566;"></div>
<div class="r" style="left:761.60px;top:115.80px;width:15.20px;height:13.30px;background:#5f6a7b;border-radius:1.8px;box-sizing:border-box;border:1px solid #4b5566;"></div>
<div class="r" style="left:779.20px;top:115.80px;width:31.40px;height:13.30px;background:#5f6a7b;border-radius:1.8px;box-sizing:border-box;border:1px solid #4b5566;"></div>
<svg class="r" style="left:715.00px;top:119.00px;" width="7" height="7" viewBox="0 0 7 7"><path d="M0.5 1 H4 M0.5 1 V6.4 H6 V3.5" fill="none" stroke="#fff" stroke-width="0.9"/><path d="M2.3 4.6 L2.6 3.3 L5.8 0.3 L6.8 1.3 L3.6 4.4 Z" fill="#fff"/></svg>
<svg class="r" style="left:732.50px;top:119.00px;" width="7" height="7" viewBox="0 0 7 7"><rect x="1.8" y="0.3" width="3.4" height="2" fill="#fff"/><rect x="0.3" y="2.3" width="6.4" height="2.8" rx="0.6" fill="#fff"/><rect x="1.8" y="4.4" width="3.4" height="2.3" fill="#fff" stroke="#5b6677" stroke-width="0.4"/></svg>
<svg class="r" style="left:749.50px;top:118.60px;" width="6" height="7.5" viewBox="0 0 6 7.5"><path d="M0.5 0.5 H3.6 L5.5 2.4 V7 H0.5 Z" fill="none" stroke="#fff" stroke-width="0.9"/><path d="M2 5.8 Q2.6 3 3 1.8 Q3.8 4.6 4.4 5.6" fill="none" stroke="#fff" stroke-width="0.6"/></svg>
<svg class="r" style="left:765.60px;top:119.60px;" width="7.5" height="5.5" viewBox="0 0 7.5 5.5"><rect x="0.2" y="0.2" width="7.1" height="5.1" fill="#fff"/><path d="M0.2 0.6 L3.75 3 L7.3 0.6" fill="none" stroke="#8a93a1" stroke-width="0.5"/></svg>
<div class="t" style="top:117.60px;left:642.40px;width:300px;text-align:center;font-size:6.4px;color:#fff;line-height:10px;transform:scaleX(0.86);transform-origin:center center;-webkit-text-stroke:0.15px #fff;">MORE</div>
<svg class="r" style="left:802.50px;top:121.60px;" width="3.5" height="2.2" viewBox="0 0 3.5 2.2"><path d="M0 0 H3.5 L1.75 2.2 Z" fill="#fff"/></svg>
<div class="r" style="left:816.10px;top:115.80px;width:63.50px;height:13.30px;background:#a0d267;border-radius:1.8px;"></div>
<div class="t" style="top:117.60px;left:697.80px;width:300px;text-align:center;font-size:6.4px;color:#fff;line-height:10px;transform:scaleX(0.9);transform-origin:center center;-webkit-text-stroke:0.15px #fff;">RECORD PAYMENT</div>
<div class="r" style="left:434.00px;top:137.20px;width:455.20px;height:0.80px;background:#f0f2f5;"></div>
<div class="t" style="top:155.70px;left:443.40px;font-size:8.7px;color:#3a7fd0;line-height:12px;transform:scaleX(0.985);transform-origin:left center;-webkit-text-stroke:0.25px #3a7fd0;">INV-000007</div>
<div class="t" style="top:170.60px;left:443.40px;font-size:6.4px;color:#454b55;line-height:10px;font-weight:700;transform:scaleX(0.9);transform-origin:left center;">Perfex INC</div>
<div class="t" style="top:179.10px;left:443.40px;font-size:6.3px;color:#454b55;line-height:10px;transform:scaleX(0.98);transform-origin:left center;">172 Ivy Club Gottliebfurt</div>
<div class="t" style="top:187.50px;left:443.40px;font-size:6.3px;color:#454b55;line-height:10px;transform:scaleX(0.98);transform-origin:left center;">New Heaven</div>
<div class="t" style="top:195.80px;left:443.40px;font-size:6.3px;color:#454b55;line-height:10px;transform:scaleX(0.98);transform-origin:left center;">Canada [CA] 2364</div>
<div class="t" style="top:152.50px;right:20.00px;font-size:6.4px;color:#454b55;line-height:10px;font-weight:700;transform:scaleX(0.88);transform-origin:right center;">Bill To:</div>
<div class="t" style="top:160.70px;right:20.00px;font-size:6.4px;color:#3f82d2;line-height:10px;transform:scaleX(0.985);transform-origin:right center;">Armstrong-Price</div>
<div class="t" style="top:168.90px;right:20.00px;font-size:6.3px;color:#454b55;line-height:10px;transform:scaleX(0.98);transform-origin:right center;">74762 Johnson Squares</div>
<div class="t" style="top:177.80px;right:20.00px;font-size:6.3px;color:#454b55;line-height:10px;transform:scaleX(0.97);transform-origin:right center;">South Silasport Pennsylvania</div>
<div class="t" style="top:186.00px;right:20.00px;font-size:6.3px;color:#454b55;line-height:10px;transform:scaleX(0.98);transform-origin:right center;">TJ 53372-4576</div>
<div class="t" style="top:204.20px;right:20.00px;font-size:6.3px;color:#454b55;line-height:10px;transform:scaleX(0.94);transform-origin:right center;"><b>Invoice Date:</b> 2018-01-25</div>
<div class="t" style="top:212.60px;right:20.00px;font-size:6.3px;color:#454b55;line-height:10px;transform:scaleX(0.94);transform-origin:right center;"><b>Due Date:</b> 2018-02-24</div>
<div class="t" style="top:220.80px;right:20.00px;font-size:6.3px;color:#454b55;line-height:10px;transform:scaleX(0.94);transform-origin:right center;"><b>Sale Agent:</b> Reymundo Erdman</div>
<div class="r" style="left:443.40px;top:242.20px;width:435.60px;height:15.70px;background:#2e3441;box-sizing:border-box;border:1px solid #1f2430;"></div>
<div class="t" style="top:245.70px;left:452.20px;font-size:6.4px;color:#ffffff;line-height:10px;font-weight:700;transform:scaleX(0.9);transform-origin:left center;">#</div>
<div class="t" style="top:245.70px;left:469.50px;font-size:6.4px;color:#ffffff;line-height:10px;font-weight:700;transform:scaleX(0.9);transform-origin:left center;">Item</div>
<div class="t" style="top:245.70px;right:192.70px;font-size:6.4px;color:#ffffff;line-height:10px;font-weight:700;transform:scaleX(0.9);transform-origin:right center;">Qty</div>
<div class="t" style="top:245.70px;right:148.80px;font-size:6.4px;color:#ffffff;line-height:10px;font-weight:700;transform:scaleX(0.9);transform-origin:right center;">Rate</div>
<div class="t" style="top:245.70px;right:77.20px;font-size:6.4px;color:#ffffff;line-height:10px;font-weight:700;transform:scaleX(0.9);transform-origin:right center;">Tax</div>
<div class="t" style="top:245.70px;right:25.00px;font-size:6.4px;color:#ffffff;line-height:10px;font-weight:700;transform:scaleX(0.9);transform-origin:right center;">Amount</div>
<svg class="r" style="left:444.00px;top:263.00px;" width="4" height="8" viewBox="0 0 4 8"><rect x="0" y="0" width="1" height="1" fill="#cdd1d7"/><rect x="0" y="2" width="1" height="1" fill="#cdd1d7"/><rect x="0" y="4" width="1" height="1" fill="#cdd1d7"/><rect x="0" y="6" width="1" height="1" fill="#cdd1d7"/><rect x="2" y="0" width="1" height="1" fill="#cdd1d7"/><rect x="2" y="2" width="1" height="1" fill="#cdd1d7"/><rect x="2" y="4" width="1" height="1" fill="#cdd1d7"/><rect x="2" y="6" width="1" height="1" fill="#cdd1d7"/></svg>
<div class="t" style="top:261.70px;left:453.50px;font-size:6.3px;color:#454b55;line-height:10px;">1</div>
<div class="t" style="top:261.70px;left:469.50px;font-size:6.4px;color:#454b55;line-height:10px;font-weight:700;transform:scaleX(0.9);transform-origin:left center;">SEO Optimization</div>
<div class="t" style="top:270.70px;left:469.50px;font-size:6.3px;color:#454b55;line-height:10px;transform:scaleX(0.967);transform-origin:left center;">Repudiandae dolores est aut modi aut eum. Reiciendis et sint sint unde.</div>
<div class="t" style="top:261.70px;right:192.80px;font-size:6.3px;color:#454b55;line-height:10px;">3</div>
<div class="t" style="top:261.70px;right:148.80px;font-size:6.3px;color:#454b55;line-height:10px;transform:scaleX(0.98);transform-origin:right center;">500.00</div>
<div class="t" style="top:261.70px;right:77.20px;font-size:6.3px;color:#454b55;line-height:10px;transform:scaleX(0.96);transform-origin:right center;">TAX1 18.00%</div>
<div class="t" style="top:261.70px;right:25.00px;font-size:6.3px;color:#454b55;line-height:10px;transform:scaleX(0.98);transform-origin:right center;">1,500.00</div>
<svg class="r" style="left:444.00px;top:288.00px;" width="4" height="8" viewBox="0 0 4 8"><rect x="0" y="0" width="1" height="1" fill="#cdd1d7"/><rect x="0" y="2" width="1" height="1" fill="#cdd1d7"/><rect x="0" y="4" width="1" height="1" fill="#cdd1d7"/><rect x="0" y="6" width="1" height="1" fill="#cdd1d7"/><rect x="2" y="0" width="1" height="1" fill="#cdd1d7"/><rect x="2" y="2" width="1" height="1" fill="#cdd1d7"/><rect x="2" y="4" width="1" height="1" fill="#cdd1d7"/><rect x="2" y="6" width="1" height="1" fill="#cdd1d7"/></svg>
<div class="t" style="top:286.90px;left:453.50px;font-size:6.3px;color:#454b55;line-height:10px;">2</div>
<div class="t" style="top:286.90px;left:469.50px;font-size:6.4px;color:#454b55;line-height:10px;font-weight:700;transform:scaleX(0.9);transform-origin:left center;">LCD TV</div>
<div class="t" style="top:295.90px;left:469.50px;font-size:6.3px;color:#454b55;line-height:10px;transform:scaleX(0.967);transform-origin:left center;">Ipsum quis et accusamus consequatur non maxime. Quos recusandae</div>
<div class="t" style="top:304.00px;left:469.50px;font-size:6.3px;color:#454b55;line-height:10px;transform:scaleX(0.967);transform-origin:left center;">atque excepturi.</div>
<div class="t" style="top:286.90px;right:192.80px;font-size:6.3px;color:#454b55;line-height:10px;">1</div>
<div class="t" style="top:286.90px;right:148.80px;font-size:6.3px;color:#454b55;line-height:10px;transform:scaleX(0.98);transform-origin:right center;">250.00</div>
<div class="t" style="top:286.90px;right:77.20px;font-size:6.3px;color:#454b55;line-height:10px;transform:scaleX(0.96);transform-origin:right center;">TAX1 18.00%</div>
<div class="t" style="top:295.50px;right:77.20px;font-size:6.3px;color:#454b55;line-height:10px;transform:scaleX(0.96);transform-origin:right center;">TAX2 10.00%</div>
<div class="t" style="top:286.90px;right:25.00px;font-size:6.3px;color:#454b55;line-height:10px;transform:scaleX(0.98);transform-origin:right center;">250.00</div>
<svg class="r" style="left:444.00px;top:321.00px;" width="4" height="8" viewBox="0 0 4 8"><rect x="0" y="0" width="1" height="1" fill="#cdd1d7"/><rect x="0" y="2" width="1" height="1" fill="#cdd1d7"/><rect x="0" y="4" width="1" height="1" fill="#cdd1d7"/><rect x="0" y="6" width="1" height="1" fill="#cdd1d7"/><rect x="2" y="0" width="1" height="1" fill="#cdd1d7"/><rect x="2" y="2" width="1" height="1" fill="#cdd1d7"/><rect x="2" y="4" width="1" height="1" fill="#cdd1d7"/><rect x="2" y="6" width="1" height="1" fill="#cdd1d7"/></svg>
<div class="t" style="top:320.30px;left:453.50px;font-size:6.3px;color:#454b55;line-height:10px;">3</div>
<div class="t" style="top:320.30px;left:469.50px;font-size:6.4px;color:#454b55;line-height:10px;font-weight:700;transform:scaleX(0.9);transform-origin:left center;">USB Stick</div>
<div class="t" style="top:329.30px;left:469.50px;font-size:6.3px;color:#454b55;line-height:10px;transform:scaleX(0.967);transform-origin:left center;">Et est sunt aspernatur quia eaque. Commodi quis qui et ad et.</div>
<div class="t" style="top:320.30px;right:192.80px;font-size:6.3px;color:#454b55;line-height:10px;">1</div>
<div class="t" style="top:320.30px;right:148.80px;font-size:6.3px;color:#454b55;line-height:10px;transform:scaleX(0.98);transform-origin:right center;">30.00</div>
<div class="t" style="top:320.30px;right:77.20px;font-size:6.3px;color:#454b55;line-height:10px;transform:scaleX(0.96);transform-origin:right center;">0%</div>
<div class="t" style="top:320.30px;right:25.00px;font-size:6.3px;color:#454b55;line-height:10px;transform:scaleX(0.98);transform-origin:right center;">30.00</div>
<div class="r" style="left:443.50px;top:283.20px;width:435.50px;height:0.80px;background:#eceff2;"></div>
<div class="r" style="left:443.50px;top:316.50px;width:435.50px;height:0.80px;background:#eceff2;"></div>
<div class="r" style="left:743.60px;top:363.00px;width:135.40px;height:1.00px;background:#eceff2;"></div>
<div class="t" style="top:367.60px;right:84.00px;font-size:6.4px;color:#454b55;line-height:10px;font-weight:700;transform:scaleX(0.905);transform-origin:right center;">Sub Total</div>
<div class="t" style="top:367.60px;right:25.50px;font-size:6.3px;color:#454b55;line-height:10px;transform:scaleX(0.98);transform-origin:right center;">$1,780.00</div>
<div class="r" style="left:743.60px;top:379.04px;width:135.40px;height:1.00px;background:#eceff2;"></div>
<div class="t" style="top:383.66px;right:84.00px;font-size:6.4px;color:#454b55;line-height:10px;font-weight:700;transform:scaleX(0.905);transform-origin:right center;">TAX1 (18.00%)</div>
<div class="t" style="top:383.66px;right:25.50px;font-size:6.3px;color:#454b55;line-height:10px;transform:scaleX(0.98);transform-origin:right center;">$315.00</div>
<div class="r" style="left:743.60px;top:395.08px;width:135.40px;height:1.00px;background:#eceff2;"></div>
<div class="t" style="top:399.72px;right:84.00px;font-size:6.4px;color:#454b55;line-height:10px;font-weight:700;transform:scaleX(0.905);transform-origin:right center;">TAX2 (10.00%)</div>
<div class="t" style="top:399.72px;right:25.50px;font-size:6.3px;color:#454b55;line-height:10px;transform:scaleX(0.98);transform-origin:right center;">$25.00</div>
<div class="r" style="left:743.60px;top:411.12px;width:135.40px;height:1.00px;background:#eceff2;"></div>
<div class="t" style="top:415.78px;right:84.00px;font-size:6.4px;color:#454b55;line-height:10px;font-weight:700;transform:scaleX(0.905);transform-origin:right center;">Total</div>
<div class="t" style="top:415.78px;right:25.50px;font-size:6.3px;color:#454b55;line-height:10px;transform:scaleX(0.98);transform-origin:right center;">$2,120.00</div>
<div class="r" style="left:743.60px;top:427.16px;width:135.40px;height:1.00px;background:#eceff2;"></div>
<div class="t" style="top:431.84px;right:84.00px;font-size:6.4px;color:#454b55;line-height:10px;font-weight:700;transform:scaleX(0.905);transform-origin:right center;">Total Paid</div>
<div class="t" style="top:431.84px;right:25.50px;font-size:6.3px;color:#454b55;line-height:10px;transform:scaleX(0.98);transform-origin:right center;">-$2,120.00</div>
<div class="r" style="left:743.60px;top:443.20px;width:135.40px;height:1.00px;background:#eceff2;"></div>
<div class="t" style="top:447.90px;right:84.00px;font-size:6.4px;color:#454b55;line-height:10px;font-weight:700;transform:scaleX(0.905);transform-origin:right center;">Amount Due</div>
<div class="t" style="top:447.90px;right:25.50px;font-size:6.3px;color:#454b55;line-height:10px;transform:scaleX(0.98);transform-origin:right center;">$0.00</div>
<div class="r" style="left:443.20px;top:478.30px;width:435.80px;height:0.80px;background:#eceff2;"></div>
</body></html>
